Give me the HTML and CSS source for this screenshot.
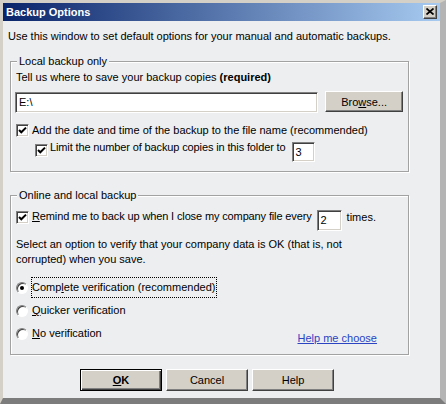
FILE: index.html
```html
<!DOCTYPE html>
<html lang="en">
<head>
<meta charset="utf-8">
<title>Backup Options</title>
<link rel="stylesheet" href="styles.css">
</head>
<body>
<div class="window">
  <div class="titlebar">
    <span class="title">Backup Options</span>
    <span class="close"><svg width="8" height="7" viewBox="0 0 8 7"><path d="M0.5 0.5 L7.5 6.5 M7.5 0.5 L0.5 6.5" stroke="#000" stroke-width="1.7" fill="none"/></svg></span>
  </div>
  <div class="content">
    <p class="intro">Use this window to set default options for your manual and automatic backups.</p>

    <fieldset class="group g1">
      <legend>Local backup only</legend>
      <p class="line">Tell us where to save your backup copies <b>(required)</b></p>
      <div class="pathrow">
        <span class="field path">E:\</span>
        <span class="btn browse">Bro<u>w</u>se...</span>
      </div>
      <div class="check-row r1">
        <span class="cb"><svg width="9" height="9" viewBox="0 0 9 9"><path d="M1 4 L3.3 6.3 L8 1.6" stroke="#000" stroke-width="2" fill="none"/></svg></span>
        <span class="lbl">Add the date and time of the backup to the file name (recommended)</span>
      </div>
      <div class="check-row r2">
        <span class="cb"><svg width="9" height="9" viewBox="0 0 9 9"><path d="M1 4 L3.3 6.3 L8 1.6" stroke="#000" stroke-width="2" fill="none"/></svg></span>
        <span class="lbl tight">Limit the number of backup copies in this folder to</span>
        <span class="field num n3">3</span>
      </div>
    </fieldset>

    <fieldset class="group g2">
      <legend>Online and local backup</legend>
      <div class="check-row r3">
        <span class="cb"><svg width="9" height="9" viewBox="0 0 9 9"><path d="M1 4 L3.3 6.3 L8 1.6" stroke="#000" stroke-width="2" fill="none"/></svg></span>
        <span class="lbl tight"><u>R</u>emind me to back up when I close my company file every</span>
        <span class="field num n2">2</span>
        <span class="lbl times">times.</span>
      </div>
      <p class="para">Select an option to verify that your company data is OK (that is, not<br>corrupted) when you save.</p>
      <div class="radios">
        <div class="radio-row">
          <span class="rb on"></span>
          <span class="rlbl focus">Comp<u>l</u>ete verification (recommended)</span>
        </div>
        <div class="radio-row">
          <span class="rb"></span>
          <span class="rlbl"><u>Q</u>uicker verification</span>
        </div>
        <div class="radio-row">
          <span class="rb"></span>
          <span class="rlbl"><u>N</u>o verification</span>
          <a class="help" href="#">Help me choose</a>
        </div>
      </div>
    </fieldset>

    <div class="buttons">
      <span class="btn dlg default"><b><u>O</u>K</b></span>
      <span class="btn dlg">Cancel</span>
      <span class="btn dlg">Help</span>
    </div>
  </div>
</div>
</body>
</html>
```

FILE: styles.css
```css
html, body {
  margin: 0;
  padding: 0;
  background: #d4d0c8;
}
body {
  font-family: "Liberation Sans", Arial, sans-serif;
  font-size: 11px;
  color: #000;
}
.window {
  width: 446px;
  height: 404px;
  box-sizing: border-box;
  background: #eceef0;
  border-style: solid;
  border-width: 3px 6px 6px 3px;
  border-color: #d4d0c8 #b4b4b4 #7c7c7c #d4d0c8;
  display: flex;
  flex-direction: column;
}
.titlebar {
  height: 18px;
  flex: none;
  display: flex;
  align-items: center;
  justify-content: space-between;
  padding: 0 3px;
  background: linear-gradient(to right, #0a246a, #a6caf0);
}
.title {
  color: #fff;
  font-weight: bold;
  font-size: 11px;
  line-height: 18px;
}
.close {
  width: 14px;
  height: 14px;
  box-sizing: border-box;
  background: #d4d0c8;
  border: 1px solid;
  border-color: #fff #404040 #404040 #fff;
  box-shadow: inset -1px -1px #808080;
  display: flex;
  align-items: center;
  justify-content: center;
  padding-bottom: 1px;
}
.close svg { display: block; }
.content {
  padding: 0 5px;
  display: flex;
  flex-direction: column;
}
p { margin: 0; }
.intro {
  margin-top: 9px;
  line-height: 13px;
}
.group {
  box-sizing: border-box;
  width: 399px;
  margin: 0 0 0 2px;
  border: 1px solid #a2a2a2;
  box-shadow: 1px 1px 0 #fff, inset 1px 1px 0 #fff;
  padding: 0 5px 9px 5px;
  min-inline-size: 0;
}
.group legend {
  line-height: 13px;
  padding: 0 2px;
  margin-left: 1px;
  background: #eceef0;
}
.g1 { margin-top: 12px; }
.g2 { margin-top: 17px; }
.line {
  margin-top: 3px;
  line-height: 13px;
}
.pathrow {
  margin-top: 8px;
  margin-left: -1px;
  display: flex;
  align-items: flex-start;
  gap: 7px;
}
.field {
  box-sizing: border-box;
  background: #fff;
  border: 1px solid;
  border-color: #808080 #fff #fff #808080;
  box-shadow: inset 1px 1px #404040, inset -1px -1px #d4d0c8;
  display: block;
}
.path {
  width: 304px;
  height: 21px;
  line-height: 19px;
  padding-left: 3px;
}
.btn {
  box-sizing: border-box;
  background: #d4d0c8;
  border: 1px solid;
  border-color: #fff #404040 #404040 #fff;
  box-shadow: inset -1px -1px #808080;
  display: flex;
  align-items: center;
  justify-content: center;
}
.browse {
  width: 78px;
  height: 21px;
  margin-top: -1px;
}
.check-row {
  display: flex;
  align-items: flex-start;
}
.cb {
  flex: none;
  width: 13px;
  height: 13px;
  box-sizing: border-box;
  background: #fff;
  border: 1px solid;
  border-color: #808080 #fff #fff #808080;
  box-shadow: inset 1px 1px #404040, inset -1px -1px #d4d0c8;
  display: flex;
  align-items: center;
  justify-content: center;
}
.cb svg { display: block; }
.lbl {
  line-height: 13px;
  margin-left: 3px;
  white-space: nowrap;
}
.lbl.tight { letter-spacing: -0.13px; }
.r1 { margin-top: 11px; }
.r2 { margin-top: 4px; margin-left: 19px; }
.r2 .cb { margin-top: 3px; }
.r2 .lbl { margin-left: 2px; }
.num {
  margin-left: 6px;
  line-height: 16px;
  padding-left: 3px;
}
.n3 {
  width: 23px;
  height: 20px;
  margin-top: 1px;
  padding-top: 1px;
}
.r3 { margin-top: 8px; }
.r3 .cb { margin-top: 1px; }
.n2 {
  width: 25px;
  height: 21px;
  margin-left: 5px;
  padding-top: 1px;
}
.lbl.times { margin-left: 5px; margin-top: 1px; }
.para {
  margin-top: 6px;
  line-height: 15px;
}
.radios {
  margin-top: 9px;
  display: flex;
  flex-direction: column;
}
.radio-row {
  height: 23px;
  display: flex;
  align-items: center;
}
.rb {
  flex: none;
  position: relative;
  width: 12px;
  height: 12px;
  box-sizing: border-box;
  border-radius: 50%;
  background: #fff;
  border: 1px solid;
  border-color: #808080 #fff #fff #808080;
  box-shadow: inset 1px 1px #404040;
}
.rb.on::after {
  content: "";
  position: absolute;
  left: 3px;
  top: 3px;
  width: 4px;
  height: 4px;
  border-radius: 50%;
  background: #000;
}
.rlbl {
  margin-left: 3px;
  line-height: 13px;
  padding: 3px 1px 3px 0;
  border: 1px dotted transparent;
  white-space: nowrap;
}
.rlbl.focus { border-color: #000; }
.help {
  margin-left: auto;
  margin-right: 26px;
  align-self: flex-end;
  line-height: 13px;
  color: #2a44c4;
  text-decoration: underline;
}
.buttons {
  margin-top: 14px;
  padding-left: 72px;
  display: flex;
  gap: 4px;
}
.dlg {
  width: 82px;
  height: 22px;
}
.default {
  border-color: #000;
  box-shadow: inset 1px 1px #fff, inset -1px -1px #404040, inset -2px -2px #808080;
}
```
